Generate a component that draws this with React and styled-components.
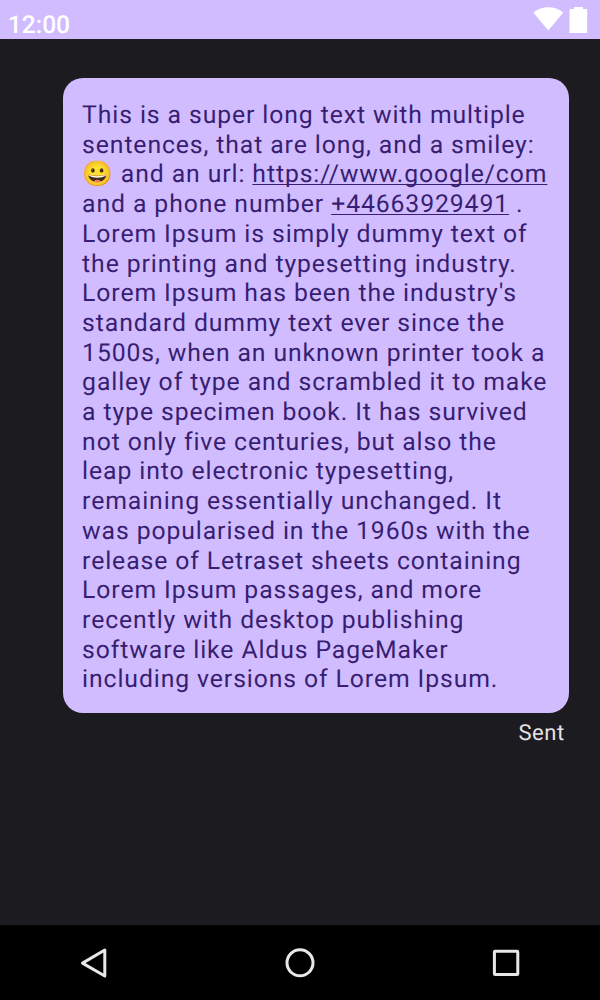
import React from "react";
import styled, { createGlobalStyle } from "styled-components";

const GlobalStyle = createGlobalStyle`
  * { box-sizing: border-box; }
  body {
    margin: 0;
    background: #1c1b1f;
    font-family: Roboto, "Noto Sans", sans-serif;
    text-rendering: geometricPrecision;
  }
`;

const Screen = styled.div`
  display: flex;
  flex-direction: column;
  width: 600px;
  height: 1000px;
  overflow: hidden;
  background: #1c1b1f;
`;

const StatusBar = styled.header`
  display: flex;
  justify-content: space-between;
  flex: none;
  height: 39px;
  padding: 0 12px 0 7.7px;
  background: #d0bcff;
  color: #fff;
`;

const Clock = styled.time`
  padding-top: 12px;
  font-size: 24.6px;
  line-height: 27px;
  font-weight: 500;
`;

const StatusIcons = styled.div`
  display: flex;
  gap: 5px;
  padding-top: 7px;
`;

const Conversation = styled.main`
  display: flex;
  flex: 1;
  flex-direction: column;
  align-items: flex-end;
  padding: 39px 31.4px 0 0;
`;

const Bubble = styled.div`
  width: 506px;
  height: 635px;
  padding: 23px 0 0 19.5px;
  border-radius: 20px;
  background: #d0bcff;
  color: #381e72;
  font-size: 24.75px;
  line-height: 29.7px;
  letter-spacing: 0.9px;
`;

const Line = styled.span`
  display: block;
  white-space: pre;
`;

const Link = styled.a`
  color: inherit;
  text-decoration: underline;
  text-decoration-thickness: 1.3px;
  text-underline-offset: 2px;
  text-decoration-skip-ink: none;
`;

const Emoji = styled.span`
  font-family: "Noto Color Emoji", Roboto, sans-serif;
`;

const Status = styled.div`
  padding: 7px 4px 0 0;
  color: #e6e1e5;
  font-size: 22px;
  line-height: 28px;
  letter-spacing: 0.5px;
`;

const NavBar = styled.nav`
  display: flex;
  flex: none;
  justify-content: space-between;
  align-items: center;
  height: 75px;
  padding: 0 74px;
  background: #000;
`;

const NavIcon = styled.svg`
  width: 40px;
  height: 40px;
  fill: none;
  stroke: #e8e8e8;
  stroke-width: 3;
  stroke-linejoin: round;
`;

const before = ["This is a super long text with multiple", "sentences, that are long, and a smiley:"];
const after = [
  "Lorem Ipsum is simply dummy text of",
  "the printing and typesetting industry.",
  "Lorem Ipsum has been the industry's",
  "standard dummy text ever since the",
  "1500s, when an unknown printer took a",
  "galley of type and scrambled it to make",
  "a type specimen book. It has survived",
  "not only five centuries, but also the",
  "leap into electronic typesetting,",
  "remaining essentially unchanged. It",
  "was popularised in the 1960s with the",
  "release of Letraset sheets containing",
  "Lorem Ipsum passages, and more",
  "recently with desktop publishing",
  "software like Aldus PageMaker",
  "including versions of Lorem Ipsum.",
];

export default function App() {
  return (
    <>
      <GlobalStyle />
      <Screen>
        <StatusBar>
          <Clock>12:00</Clock>
          <StatusIcons>
            <svg width="31" height="24" viewBox="0 0 31 24" fill="#fff">
              <path d="M0.3 5.4C9.5 -1.6 21.5 -1.6 30.2 5.4L15.3 23.6Z" />
            </svg>
            <svg width="19" height="26" viewBox="0 0 19 26" fill="#fff">
              <path d="M5 0H14V2H17.5L18.2 2.7V26H0.5V2.7L1.2 2H5Z" />
            </svg>
          </StatusIcons>
        </StatusBar>
        <Conversation>
          <Bubble>
            {before.map((text) => <Line key={text}>{text}</Line>)}
            <Line><Emoji>😀</Emoji> and an url: <Link>https://www.google/com</Link></Line>
            <Line>and a phone number <Link>+44663929491</Link> .</Line>
            {after.map((text) => <Line key={text}>{text}</Line>)}
          </Bubble>
          <Status>Sent</Status>
        </Conversation>
        <NavBar>
          <NavIcon viewBox="0 0 40 40"><path d="M8.5 20.1L30.8 7V33Z" /></NavIcon>
          <NavIcon viewBox="0 0 40 40"><circle cx="20" cy="19.8" r="13" /></NavIcon>
          <NavIcon viewBox="0 0 40 40"><rect x="8.4" y="8.2" width="23.4" height="23.4" rx="0.8" /></NavIcon>
        </NavBar>
      </Screen>
    </>
  );
}
